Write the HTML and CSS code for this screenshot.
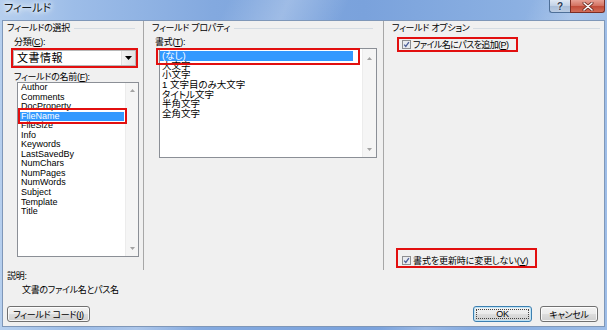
FILE: index.html
```html
<!DOCTYPE html>
<html lang="ja">
  <head>
    <meta charset="UTF-8" />
    <meta name="viewport" content="width=device-width, initial-scale=1.0" />
    <title>フィールド</title>
    <link rel="stylesheet" href="styles.css">
  </head>
  <body>
    <div class="window">
      <div class="titlebar">
        <span class="title">フィールド</span>
        <div class="caption">
          <span class="cap help">?</span>
          <span class="cap close">
            <svg width="12" height="9" viewBox="0 0 12 9">
              <path d="M2 1l8 7M10 1l-8 7" stroke="#6b2a22" stroke-width="3" stroke-linecap="round"/>
              <path d="M2 1l8 7M10 1l-8 7" stroke="#fff" stroke-width="1.5" stroke-linecap="round"/>
            </svg>
          </span>
        </div>
      </div>

      <div class="client">
        <div class="columns">
          <section class="col col-select">
            <div class="group">フィールドの選択</div>
            <div class="label">分類(<u>C</u>):</div>
            <div class="combo marked">
              <span class="combo-text">文書情報</span>
              <span class="combo-btn">
                <svg width="7" height="4" viewBox="0 0 7 4"><path d="M0 0h7L3.5 4z" fill="#000"/></svg>
              </span>
            </div>
            <div class="label label-names">フィールドの名前(<u>F</u>):</div>
            <div class="listbox names">
              <ul>
                <li>Author</li>
                <li>Comments</li>
                <li>DocProperty</li>
                <li class="selected mark-name">FileName</li>
                <li>FileSize</li>
                <li>Info</li>
                <li>Keywords</li>
                <li>LastSavedBy</li>
                <li>NumChars</li>
                <li>NumPages</li>
                <li>NumWords</li>
                <li>Subject</li>
                <li>Template</li>
                <li>Title</li>
              </ul>
              <div class="scroll">
                <svg class="arrow" width="5" height="3" viewBox="0 0 5 3"><path d="M0 3h5L2.5 0z"/></svg>
                <svg class="arrow" width="5" height="3" viewBox="0 0 5 3"><path d="M0 0h5L2.5 3z"/></svg>
              </div>
            </div>
          </section>

          <section class="col col-props">
            <div class="group">フィールド プロパティ</div>
            <div class="label">書式(<u>T</u>):</div>
            <div class="listbox formats">
              <ul>
                <li class="selected mark-format">(なし)</li>
                <li>大文字</li>
                <li>小文字</li>
                <li>1 文字目のみ大文字</li>
                <li>タイトル文字</li>
                <li>半角文字</li>
                <li>全角文字</li>
              </ul>
              <div class="scroll">
                <svg class="arrow" width="5" height="3" viewBox="0 0 5 3"><path d="M0 3h5L2.5 0z"/></svg>
                <svg class="arrow" width="5" height="3" viewBox="0 0 5 3"><path d="M0 0h5L2.5 3z"/></svg>
              </div>
            </div>
          </section>

          <section class="col col-options">
            <div class="group">フィールド オプション</div>
            <label class="option option-path">
              <svg class="check" width="9" height="9" viewBox="0 0 9 9">
                <rect x="0.5" y="0.5" width="8" height="8" fill="#e9ebef" stroke="#8e8f91"/>
                <path d="M2.2 4.6l1.6 1.9L6.9 2.2" fill="none" stroke="#4d5f98" stroke-width="1.3"/>
              </svg>
              <span>ファイル名にパスを追加(<u>P</u>)</span>
            </label>
            <label class="option option-keep">
              <svg class="check" width="9" height="9" viewBox="0 0 9 9">
                <rect x="0.5" y="0.5" width="8" height="8" fill="#e9ebef" stroke="#8e8f91"/>
                <path d="M2.2 4.6l1.6 1.9L6.9 2.2" fill="none" stroke="#4d5f98" stroke-width="1.3"/>
              </svg>
              <span>書式を更新時に変更しない(<u>V</u>)</span>
            </label>
          </section>
        </div>

        <div class="footer">
          <div class="desc-label">説明:</div>
          <div class="desc">文書のファイル名とパス名</div>
          <div class="buttons">
            <button class="btn btn-code">フィールド コード(<u>I</u>)</button>
            <div class="btn-group">
              <button class="btn btn-ok">OK</button>
              <button class="btn btn-cancel">キャンセル</button>
            </div>
          </div>
        </div>
      </div>
    </div>
  </body>
</html>
```

FILE: styles.css
```css
* {
  box-sizing: border-box;
}
body {
  margin: 0;
  font-family: "Liberation Sans", "Noto Sans CJK JP", sans-serif;
  font-size: 9px;
  font-feature-settings: "palt";
  letter-spacing: -0.3px;
  color: #000;
}
u {
  text-decoration: underline;
}

/* window frame */
.window {
  width: 607px;
  height: 330px;
  padding: 0 2px 3px;
  display: flex;
  flex-direction: column;
  background:
    linear-gradient(115deg, rgba(255,255,255,0) 30%, rgba(255,255,255,0.25) 38%, rgba(255,255,255,0) 46%, rgba(255,255,255,0) 70%, rgba(255,255,255,0.2) 76%, rgba(255,255,255,0) 82%),
    linear-gradient(90deg, #b6cfee 0%, #9dbde8 12%, #83a9df 35%, #7aa2dc 60%, #8bb0e2 85%, #9ebde7 100%);
}
.titlebar {
  height: 20px;
  display: flex;
  justify-content: space-between;
  align-items: flex-start;
}
.title {
  font-size: 11px;
  line-height: 17px;
  padding-left: 2px;
  letter-spacing: 0;
  color: #101820;
  text-shadow: 0 0 4px #fff, 0 0 6px #fff, 0 0 8px #eaf3ff;
}
.caption {
  display: flex;
}
.cap {
  height: 13px;
  display: flex;
  align-items: center;
  justify-content: center;
  border: 1px solid #4e6f98;
  border-top: none;
}
.help {
  width: 21px;
  border-right: none;
  border-radius: 0 0 0 3px;
  background: linear-gradient(#dfe8f4, #c1d1e6 50%, #a9bed9 51%, #b9cbe3);
  font-size: 10px;
  font-weight: bold;
  color: #2b3a52;
  text-shadow: 0 0 2px #fff;
}
.close {
  width: 35px;
  border-color: #7a2d24;
  border-radius: 0 0 3px 0;
  background: linear-gradient(#e7a094, #d2705f 50%, #c04a38 51%, #d36d58);
}

/* client area */
.client {
  flex: 1;
  display: flex;
  flex-direction: column;
  background: #f0f0f0;
  border: 1px solid #7f97b8;
}
.columns {
  display: grid;
  grid-template-columns: 141px 240px 1fr;
  height: 249px;
}
.col {
  display: flex;
  flex-direction: column;
  align-items: flex-start;
}
.col-select {
  border-right: 1px solid #a7a7a7;
  padding: 0 8px 0 4px;
}
.col-props {
  border-right: 1px solid #a7a7a7;
  padding: 0 10px 0 8px;
}
.col-options {
  padding: 0 4px 2px 8px;
}
.group {
  align-self: stretch;
  display: flex;
  align-items: center;
  margin-top: 2px;
  line-height: 11px;
  white-space: nowrap;
}
.group::after {
  content: "";
  flex: 1;
  height: 1px;
  margin-left: 4px;
  background: #d5dce3;
}
.label {
  margin: 3px 0 0 7px;
  line-height: 10px;
}
.col-props .label {
  margin-left: 3px;
}
.label-names {
  margin-top: 6px;
}

/* combo box */
.combo {
  width: 123px;
  height: 16px;
  margin: 3px 0 0 6px;
  display: flex;
  background: #fff;
  border: 1px solid #b8b8b8;
}
.marked {
  outline: 2px solid #e20f0f;
}
.combo-text {
  flex: 1;
  padding-left: 3px;
  font-size: 11px;
  line-height: 14px;
  letter-spacing: 0.5px;
}
.combo-btn {
  width: 14px;
  display: flex;
  align-items: center;
  justify-content: center;
  background: linear-gradient(90deg, #f4f4f4, #e3e3e3);
  border-left: 1px solid #e0e0e0;
}

/* list boxes */
.listbox {
  display: flex;
  background: #fff;
  border: 1px solid #8b8f96;
}
.listbox ul {
  flex: 1;
  margin: 0;
  list-style: none;
  letter-spacing: 0;
}
.listbox li {
  position: relative;
  white-space: nowrap;
}
.names {
  width: 122px;
  height: 175px;
  margin: 0 0 0 10px;
}
.names ul {
  padding: 0 1px 0 2px;
}
.names li {
  height: 9.55px;
  line-height: 9.55px;
  padding-left: 1px;
}
.formats {
  width: 218px;
  height: 110px;
  margin: 1px 0 0 7px;
}
.formats ul {
  padding: 2px 0 0 0;
  font-size: 9.5px;
}
.formats li {
  width: 193px;
  height: 9.65px;
  line-height: 9.65px;
  padding-left: 2px;
}
.selected {
  background: #3399ff;
  color: #fff;
}
.mark-name::after,
.mark-format::after {
  content: "";
  position: absolute;
  border: 2px solid #e20f0f;
  z-index: 1;
}
.mark-name::after {
  top: -4px;
  bottom: -3px;
  left: -2px;
  right: -3px;
}
.mark-format::after {
  top: -3px;
  bottom: -4px;
  left: -4px;
  right: -7px;
}
.scroll {
  width: 13px;
  display: flex;
  flex-direction: column;
  justify-content: space-between;
  align-items: center;
  padding: 6px 0;
  background: #f5f5f5;
  border-left: 1px solid #ececec;
}
.formats .scroll {
  width: 14px;
  padding: 8px 0 6px;
}
.arrow path {
  fill: #a3a3a3;
}

/* options */
.option {
  display: flex;
  align-items: center;
  border: 2px solid #e20f0f;
  white-space: nowrap;
}
.check {
  flex: none;
  margin-right: 2px;
}
.option-path {
  width: 121px;
  height: 15px;
  margin: 3px 0 0 5px;
  padding-left: 3px;
  letter-spacing: -0.6px;
}
.option-keep {
  width: 141px;
  height: 20px;
  margin: auto 0 0 4px;
  padding: 4px 0 0 4px;
  letter-spacing: -0.1px;
}

/* footer */
.footer {
  flex: 1;
  padding: 0 6px 4px 4px;
  display: flex;
  flex-direction: column;
}
.desc-label {
  line-height: 10px;
  margin-top: 1px;
}
.desc {
  line-height: 10px;
  margin-top: 4px;
  padding-left: 15px;
}
.buttons {
  margin-top: auto;
  display: flex;
  justify-content: space-between;
}
.btn-group {
  display: flex;
  gap: 8px;
}
.btn {
  position: relative;
  height: 16px;
  padding: 0;
  font: inherit;
  letter-spacing: inherit;
  color: #000;
  border: 1px solid #707070;
  border-radius: 3px;
  background: linear-gradient(#f2f2f2 0%, #ebebeb 48%, #dddddd 52%, #cfcfcf 100%);
  box-shadow: inset 0 0 0 1px rgba(255,255,255,0.8);
}
.btn-code {
  width: 83px;
}
.btn-ok {
  width: 59px;
  border-color: #3c7fb1;
  box-shadow: inset 0 0 0 1px #bfe3f5;
}
.btn-ok::after {
  content: "";
  position: absolute;
  inset: 2px;
  border: 1px dotted #444;
}
.btn-cancel {
  width: 58px;
}
```
